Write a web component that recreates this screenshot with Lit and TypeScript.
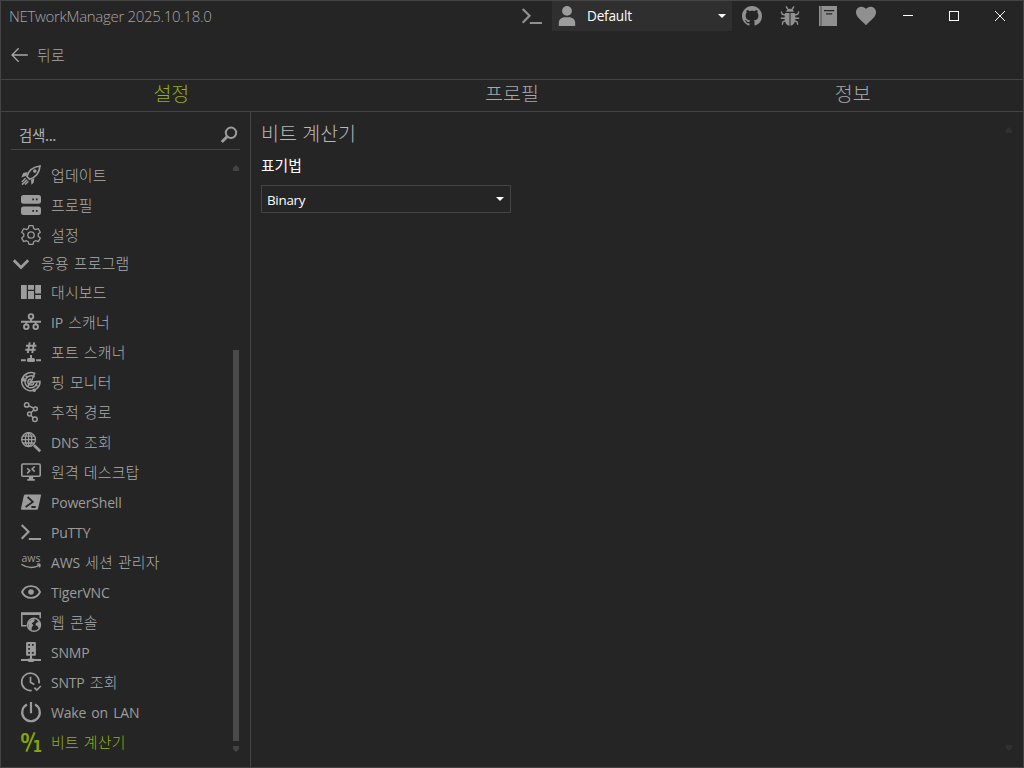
import { LitElement, html, svg, css, nothing } from "lit";
import { customElement, property, state } from "lit/decorators.js";

const ICONS: Record<string, unknown> = {
  rocket: svg`<g fill="none" stroke="currentColor"><path stroke-width="1.7" d="M6 11.6C7.4 6.6 11.6 1.8 19 1c-.6 7-4.800 11.400-10.400 13.300z"/><circle cx="13.800" cy="6.100" r="1.800" fill="currentColor" stroke="none"/><path stroke-width="1.5" d="M4.600 13.200L.8 17M6.200 14.700L1 19.600M7.400 16.200L4 19.500"/></g><path d="M6.800 7L2.200 8.100L.3 12.600L5.500 10.800zM13.400 13.200L12.600 17.800L10.400 19.700L10 14.800z" fill="currentColor"/>`,
  servers: svg`<path fill="currentColor" fill-rule="evenodd" d="M2.500 0h15A2.500 2.500 0 0 1 20 2.500v3.700a2.500 2.500 0 0 1-2.500 2.500h-15A2.500 2.500 0 0 1 0 6.200V2.500A2.500 2.500 0 0 1 2.500 0zM11.300 3.600v1.700H13V3.600zM14.900 3.600v1.700h1.700V3.600zM2.500 11.600h15a2.500 2.500 0 0 1 2.500 2.500v3.400a2.500 2.500 0 0 1-2.500 2.500h-15A2.500 2.500 0 0 1 0 17.500v-3.400a2.500 2.500 0 0 1 2.500-2.500zM11.300 15v1.700H13V15zM14.900 15v1.700h1.700V15z"/>`,
  gear: svg`<g fill="none" stroke="currentColor" stroke-width="1.300" stroke-linejoin="round"><path d="M8 .7h4l.7 2.800 1.900 1.100 2.700-.9 2 3.500-2.100 1.900v2.100l2.100 1.900-2 3.500-2.700-.9-1.900 1.100-.7 2.600H8l-.7-2.600-1.900-1.100-2.700.9-2-3.500 2.100-1.900V9.100L.7 7.200l2-3.500 2.700.9 1.900-1.100z"/><circle cx="10" cy="10" r="3.200"/></g>`,
  dashboard: svg`<path fill="currentColor" d="M0 3h5.800v14H0zM7 3h6v4.800H7zM7 9h6v8H7zM14.200 3H20v8.600h-5.800zM14.200 13H20v4h-5.800z"/>`,
  network: svg`<g fill="none" stroke="currentColor" stroke-width="1.900"><circle cx="10" cy="4.400" r="2.300"/><circle cx="5.300" cy="14.800" r="2.300"/><circle cx="14.700" cy="14.800" r="2.300"/><path d="M10 6.800v3M0 9.800h20M5.300 9.500v3M14.700 9.500v3"/></g>`,
  port: svg`<g fill="none" stroke="currentColor"><path stroke-width="1.900" d="M8.700.3L6.800 11.200M13.200.3L11.300 11.200M5 3.800h10.400M4.300 7.700h10.400"/><path stroke-width="1.900" d="M10 13v4M0 18.300h4.800M15.200 18.300H20"/></g><rect x="6" y="16" width="8" height="4" rx="1.600" fill="currentColor"/>`,
  radar: svg`<g fill="none" stroke="currentColor" stroke-width="1.500"><path d="M14.300 1.700A9.100 9.100 0 1 0 19 9.400L10 10"/><path d="M13.600 5A6 6 0 1 0 16 10.300"/><path d="M10 7a3 3 0 1 0 2.900 3.200"/><path d="M10 10L13.800 1M10 10L6.300 14.800M1 7.500L5.500 9"/></g><g fill="currentColor"><circle cx="10" cy="10" r="1.700"/><circle cx="2.100" cy="7.500" r="1.900"/><circle cx="5.600" cy="4.700" r="1.200"/><circle cx="13.200" cy="18.200" r="1.800"/><circle cx="15.300" cy="13.200" r="1.300"/></g>`,
  route: svg`<g fill="none" stroke="currentColor" stroke-width="1.500"><circle cx="5.700" cy="2.900" r="2.200"/><circle cx="14.400" cy="6.800" r="1.900"/><circle cx="8.500" cy="12" r="1.900"/><circle cx="13.900" cy="17.300" r="2.300"/><path d="M7.800 3.900L12.500 6M12.800 8L10 10.800M10 13.400L12.200 15.700"/></g>`,
  dns: svg`<g fill="none" stroke="currentColor"><g stroke-width="1.300"><circle cx="7.600" cy="7.600" r="6.900"/><ellipse cx="7.600" cy="7.600" rx="3.200" ry="6.900"/><path d="M7.600.7v13.800M.7 7.600h13.800M1.700 4.200h11.800M1.700 11h11.800"/></g><path stroke-width="2.700" d="M13 13.200L19.200 19.200"/></g>`,
  remote: svg`<g fill="none" stroke="currentColor"><rect x=".8" y="2" width="18.400" height="12.200" rx="1.200" stroke-width="1.600"/><path stroke-width="1.600" d="M6.200 6.300L8.800 8.700L6.200 11.400M13.700 4.500L11.100 7L13.700 9.600"/></g><path fill="currentColor" d="M7.800 15h4.400v2h1.600v1.700H6.200V17h1.600z"/>`,
  powershell: svg`<path fill="currentColor" d="M4.500 2.400h14.600c.8 0 1.100.5.9 1.200l-2.900 12.900c-.2.800-.7 1.200-1.500 1.200H.9c-.8 0-1.100-.5-.9-1.200L2.900 3.600c.2-.8.8-1.200 1.600-1.200z"/><path fill="none" stroke="#252525" stroke-width="1.800" d="M6.600 5L11.800 9.900L4.600 15M10.400 15h4.300"/>`,
  prompt: svg`<path fill="none" stroke="currentColor" stroke-width="2.200" d="M.7 3L7.500 9.800L.7 16.700M7.800 17H20"/>`,
  aws: svg`<text x=".5" y="9.700" textLength="19" lengthAdjust="spacingAndGlyphs" font-size="11" font-family="Open Sans, sans-serif" font-weight="500" fill="currentColor">aws</text><path fill="none" stroke="currentColor" stroke-width="1.400" d="M.4 12.200c5.500 4 12.700 4.200 18 1.200M16.200 12.200c2.900-.5 3.600.2 2.200 3.200"/>`,
  eye: svg`<path fill="none" stroke="currentColor" stroke-width="1.900" d="M1 10C2.800 6 6.200 4.100 10 4.100S17.200 6 19 10c-1.800 3.900-5.200 5.900-9 5.900S2.800 13.900 1 10z"/><circle cx="10" cy="10" r="2.800" fill="currentColor"/>`,
  webconsole: svg`<path fill="none" stroke="currentColor" stroke-width="1.500" d="M5.700 13.700H.8V1.200h18.400v5"/><path fill="currentColor" d="M0 .4h20V3H0z"/><circle cx="13" cy="12.800" r="6.500" fill="#252525" stroke="currentColor" stroke-width="1.400"/><path fill="currentColor" d="M7 10.200l4.700-3.500 2.200 1-.8 2.100-2.300 1.400 1.600 2.300-1.600 1.600-.3 3.600-2.600-2.300zM15.200 6.800l4 4.200.3 2.600-1.700 3.200-1.200-2.500-2.100-1.200.4-2 2.300-1.100z"/>`,
  snmp: svg`<path fill="currentColor" fill-rule="evenodd" d="M6.300 0h7.400q1.200 0 1.200 1.200V13q0 .8-.9.800H6q-.9 0-.9-.8V1.200Q5.100 0 6.300 0zM7.200 2v1.800H9V2zM10.900 2v1.800h1.800V2zM7.200 6v1.800H9V6zM10.900 10v1.800h1.800V10zM7.200 10v1.800H9V10z"/><path fill="currentColor" d="M9 13h2v3.500h1.300l.8.600H20v1.900h-6.900l-.8 1H7.700l-.8-1H0v-1.900h6.900l.8-.6H9z"/>`,
  clock: svg`<g fill="none" stroke="currentColor" stroke-width="1.700"><path d="M10.800 18.500A8.700 8.700 0 1 1 18 11.300M9.500 4.800v5.500l3.800 2.100M13.400 15.600l2.400 2.400 4-4"/></g>`,
  power: svg`<g fill="none" stroke="currentColor" stroke-width="2.200"><path d="M6 2.600A8.800 8.800 0 1 0 14 2.600M10 0v11.200"/></g>`,
  bits: svg`<text x="-.6" y="10.800" font-size="15" textLength="9" lengthAdjust="spacingAndGlyphs" font-weight="700" font-family="Open Sans, sans-serif" fill="currentColor">0</text><path stroke="currentColor" stroke-width="2" d="M13.600.3L5.300 19.700"/><text x="11.800" y="20" font-size="15.500" textLength="9.200" lengthAdjust="spacingAndGlyphs" font-weight="700" font-family="DejaVu Sans, sans-serif" fill="currentColor">1</text>`,
  github: svg`<path fill="currentColor" transform="scale(1.25)" d="M8 0C3.580 0 0 3.580 0 8c0 3.540 2.290 6.530 5.470 7.590.4.070.55-.17.55-.38 0-.19-.01-.82-.01-1.490-2.010.37-2.530-.49-2.690-.94-.09-.23-.48-.94-.82-1.130-.28-.15-.68-.52-.01-.53.63-.01 1.080.58 1.230.82.72 1.210 1.870.87 2.330.66.070-.52.28-.87.51-1.070-1.780-.2-3.640-.89-3.640-3.950 0-.87.31-1.590.82-2.150-.08-.2-.36-1.020.08-2.120 0 0 .67-.21 2.200.82.64-.18 1.320-.27 2-.27s1.360.09 2 .27c1.530-1.040 2.200-.82 2.200-.82.44 1.100.16 1.920.08 2.120.51.56.82 1.270.82 2.150 0 3.070-1.870 3.750-3.650 3.950.29.25.54.73.54 1.480 0 1.070-.01 1.930-.01 2.200 0 .21.15.46.55.38A8.010 8.010 0 0 0 16 8c0-4.420-3.580-8-8-8z"/>`,
  bug: svg`<path fill="currentColor" d="M6.200 5.800C6.500 3.800 8 2.700 10 2.700s3.500 1.100 3.800 3.100zM5 7h4.500v12.700C6.500 19.400 4.600 16.500 4.600 12zM10.500 7H15l.4 5c0 4.500-1.900 7.400-4.900 7.700z"/><path fill="none" stroke="currentColor" stroke-width="1.400" d="M8 3.500L6 .4M12 3.500L14 .4M5 9L2.200 8.200L1.200 5.500M15 9l2.800-.8 1-2.700M5 12.200H.8M15 12.200h4.200M5.200 14.800L3 15.800L2.200 18.700M14.800 14.800l2.200 1 .8 2.900"/>`,
  book: svg`<path fill="currentColor" fill-rule="evenodd" d="M1 0h1.700v20H1zM3.300 0H19v20H3.300zM6 4v1.300h10.200V4zM8 7.300v1.300h6.200V7.300z"/>`,
  heart: svg`<path fill="currentColor" d="M10 19.300L8.600 17.700C3.500 13 0 10.200 0 6.200 0 3 2.500.8 5.500.8 7.300.8 9 1.700 10 3.100 11 1.700 12.700.8 14.500.8c3 0 5.500 2.200 5.500 5.400 0 4-3.500 6.800-8.600 11.500z"/>`,
  user: svg`<circle cx="10" cy="4.900" r="4.900" fill="currentColor"/><path fill="currentColor" d="M1.800 20v-3c0-3.500 2.700-5.700 6.200-5.700h4c3.500 0 6.200 2.200 6.200 5.700v3z"/>`,
  search: svg`<g fill="none" stroke="currentColor"><circle cx="12" cy="7.800" r="5.200" stroke-width="2"/><path stroke-width="2.900" d="M8 11.800L2.800 17"/></g>`,
  back: svg`<path fill="none" stroke="currentColor" stroke-width="1.300" d="M18.800 10H3M9.700 3.200L3 10l6.700 6.800"/>`,
  chevron: svg`<path fill="none" stroke="currentColor" stroke-width="2.800" d="M2.800 6.200L10 13.400L17.200 6.200"/>`,
};

interface Entry {
  icon: string;
  label: string;
}

const GENERAL: Entry[] = [
  { icon: "rocket", label: "업데이트" },
  { icon: "servers", label: "프로필" },
  { icon: "gear", label: "설정" },
];

const APPLICATIONS: Entry[] = [
  { icon: "dashboard", label: "대시보드" },
  { icon: "network", label: "IP 스캐너" },
  { icon: "port", label: "포트 스캐너" },
  { icon: "radar", label: "핑 모니터" },
  { icon: "route", label: "추적 경로" },
  { icon: "dns", label: "DNS 조회" },
  { icon: "remote", label: "원격 데스크탑" },
  { icon: "powershell", label: "PowerShell" },
  { icon: "prompt", label: "PuTTY" },
  { icon: "aws", label: "AWS 세션 관리자" },
  { icon: "eye", label: "TigerVNC" },
  { icon: "webconsole", label: "웹 콘솔" },
  { icon: "snmp", label: "SNMP" },
  { icon: "clock", label: "SNTP 조회" },
  { icon: "power", label: "Wake on LAN" },
  { icon: "bits", label: "비트 계산기" },
];

@customElement("app-icon")
class AppIcon extends LitElement {
  @property() name = "";
  static styles = css`
    :host { display: block; width: 20px; height: 20px; flex: none; }
    svg { display: block; width: 100%; height: 100%; overflow: visible; }
  `;
  render() {
    return html`<svg viewBox="0 0 20 20">${ICONS[this.name] ?? nothing}</svg>`;
  }
}

@customElement("nav-item")
class NavItem extends LitElement {
  @property() icon = "";
  @property() label = "";
  static styles = css`
    :host { display: flex; align-items: center; height: 30px; padding-left: 20px; gap: 10px; color: #9c9c9c; }
    :host([active]) { color: #86a40b; }
    .label { white-space: pre; color: #acacac; font: 300 14.900px/30px "Noto Sans CJK KR", sans-serif; letter-spacing: .22px; word-spacing: 1.500px; }
    :host([active]) .label { color: #92b20c; }
    .latin { color: #9c9c9c; font: 400 14px/28px "Open Sans", sans-serif; letter-spacing: -.2px; word-spacing: 1.800px; }
  `;
  render() {
    const parts = this.label.match(/[ -~]+|[^ -~]+/g) ?? [];
    return html`<app-icon name=${this.icon}></app-icon><span class="label"
      >${parts.map((p) => (/[A-Za-z]/.test(p) ? html`<span class="latin">${p}</span>` : p))}</span>`;
  }
}

@customElement("app-root")
class AppRoot extends LitElement {
  @state() private current = "비트 계산기";

  static styles = css`
    :host {
      display: flex; flex-direction: column; box-sizing: border-box; width: 1024px; height: 768px;
      background: #252525; border: 1px solid #444; color: #9c9c9c; overflow: hidden;
      font-family: "Noto Sans CJK KR", sans-serif;
    }
    .titlebar { display: flex; height: 30px; }
    .title { flex: 1; padding-left: 8px; color: #a6a6a6; font: 300 15px/31px "Open Sans", sans-serif; letter-spacing: -.31px; }
    .tool { width: 38px; display: grid; place-items: center; color: #909090; }
    .tool.console { width: 40px; }
    .profile { display: flex; align-items: center; width: 180px; box-sizing: border-box; margin-right: 1px; padding: 0 6px 0 5px; background: #2f2f2f; }
    .profile .name { flex: 1; padding-left: 10px; color: #fff; font: 13.600px/30px "Open Sans", sans-serif; letter-spacing: -.2px; }
    .caret { width: 8px; height: 4px; background: #fff; clip-path: polygon(0 0, 100% 0, 50% 100%); }
    .window { width: 46px; display: grid; place-items: center; color: #fff; }
    .window svg { width: 12px; height: 12px; }
    .backbar { display: flex; align-items: center; height: 48px; padding-left: 8px; gap: 8px; color: #a8a8a8; font-size: 14.900px; font-weight: 300; letter-spacing: .2px; }
    .backbar span { padding-bottom: 2px; }
    .tabs { display: grid; grid-template-columns: repeat(3, 1fr); height: 31px; border: solid #444; border-width: 1px 0; }
    .tab { text-align: center; font-size: 19.500px; line-height: 25px; font-weight: 300; color: #a8a8a8; }
    .tab.on { color: #92b20c; }
    .body { flex: 1; display: flex; min-height: 0; }
    .side { width: 249px; border-right: 1px solid #444; }
    .search { display: flex; align-items: center; height: 38px; box-sizing: border-box; margin: 0 10px 0 10px; padding: 9px 1px 0 8px; border-bottom: 1px solid #444; }
    .search .hint { flex: 1; color: #b0b0b0; font-size: 14.500px; line-height: 24px; letter-spacing: -.35px; }
    .scroll { display: flex; margin-top: 10px; }
    .list { flex: 1; }
    .group { display: flex; align-items: center; height: 27px; padding-left: 10px; gap: 10px; color: #9c9c9c; font-size: 14.900px; font-weight: 300; letter-spacing: .22px; word-spacing: 1.500px; }
    .group span { color: #acacac; padding-bottom: 2px; }
    .bar { display: flex; flex-direction: column; width: 6px; height: 587px; margin: 5px 11px 0 0; }
    .arrow { height: 6px; background: #444; clip-path: polygon(0 50%, 50% 0, 100% 50%, 100% 100%, 0 100%); }
    .arrow.down { transform: scaleY(-1); }
    .thumb { height: 391px; margin: 179px 0 5px; background: #4a4a4a; }
    .content { flex: 1; display: flex; justify-content: space-between; padding: 9px 11px 0 10px; }
    .heading { font-size: 19.500px; line-height: 24px; font-weight: 300; color: #b8b8b8; word-spacing: 1px; }
    .field { margin-top: 10px; font-size: 14.800px; line-height: 20px; color: #fff; }
    .select { display: flex; align-items: center; width: 250px; height: 28px; box-sizing: border-box; margin-top: 10px; padding: 0 6px 0 5px; border: 1px solid #444; color: #fff; font: 13.400px/26px "Open Sans", sans-serif; letter-spacing: -.28px; }
    .select .value { flex: 1; padding-top: 2px; }
    .ghost { display: flex; flex-direction: column; justify-content: space-between; width: 6px; height: 624px; padding-top: 6px; }
    .ghost .arrow { background: #303030; }
  `;

  private item(e: Entry) {
    return html`<nav-item icon=${e.icon} label=${e.label} ?active=${e.label === this.current}
      @click=${() => (this.current = e.label)}></nav-item>`;
  }

  render() {
    return html`
      <div class="titlebar">
        <div class="title">NETworkManager 2025.10.18.0</div>
        <div class="tool console"><app-icon name="prompt"></app-icon></div>
        <div class="profile"><app-icon name="user"></app-icon><span class="name">Default</span><span class="caret"></span></div>
        ${["github", "bug", "book", "heart"].map((n) => html`<div class="tool"><app-icon name=${n}></app-icon></div>`)}
        <div class="window"><svg viewBox="0 0 12 12"><path d="M1 5.500h10" stroke="currentColor"/></svg></div>
        <div class="window"><svg viewBox="0 0 12 12"><rect x="1.500" y="1.500" width="9" height="9" fill="none" stroke="currentColor"/></svg></div>
        <div class="window"><svg viewBox="0 0 12 12"><path d="M1 1L11 11M11 1L1 11" stroke="currentColor"/></svg></div>
      </div>
      <div class="backbar"><app-icon name="back"></app-icon><span>뒤로</span></div>
      <div class="tabs">
        <div class="tab on">설정</div><div class="tab">프로필</div><div class="tab">정보</div>
      </div>
      <div class="body">
        <div class="side">
          <div class="search"><span class="hint">검색...</span><app-icon name="search"></app-icon></div>
          <div class="scroll">
            <div class="list">
              ${GENERAL.map((e) => this.item(e))}
              <div class="group"><app-icon name="chevron"></app-icon><span>응용 프로그램</span></div>
              ${APPLICATIONS.map((e) => this.item(e))}
            </div>
            <div class="bar"><div class="arrow"></div><div class="thumb"></div><div class="arrow down"></div></div>
          </div>
        </div>
        <div class="content">
          <div>
            <div class="heading">비트 계산기</div>
            <div class="field">표기법</div>
            <div class="select"><span class="value">Binary</span><span class="caret"></span></div>
          </div>
          <div class="ghost"><div class="arrow"></div><div class="arrow down"></div></div>
        </div>
      </div>
    `;
  }
}
